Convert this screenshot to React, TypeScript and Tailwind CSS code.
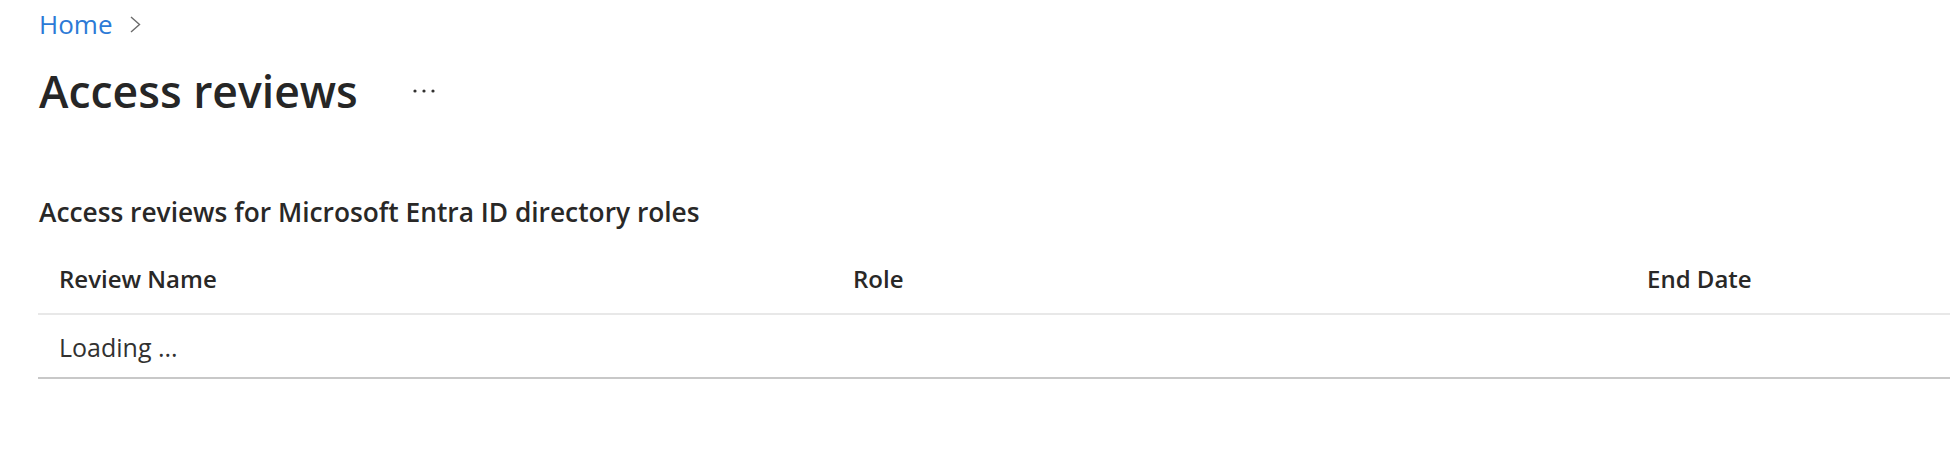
const App = () => {
  return (
    <div className="w-[1950px] h-[460px] overflow-hidden bg-white pl-[38px] font-['Open_Sans',sans-serif] text-[#323130]">
      {/* breadcrumb */}
      <div className="flex items-center pt-[6px] h-[42px]">
        <span className="pl-[1px] text-[26px] leading-[36px] text-[#2c7ad6]">Home</span>
        <svg
          className="ml-[18px]"
          width="11"
          height="17"
          viewBox="0 0 11 17"
          fill="none"
        >
          <polyline
            points="1,1 9.5,8.5 1,16"
            stroke="#6b6b6b"
            strokeWidth="1.4"
          />
        </svg>
      </div>

      {/* title */}
      <div className="flex items-center mt-[21px] h-[56px]">
        <h1 className="pl-[1px] text-[44.5px] leading-[56px] font-semibold text-[#262626]">
          Access reviews
        </h1>
        <svg className="ml-[55px]" width="22" height="4" viewBox="0 0 22 4">
          <circle cx="2" cy="2" r="1.6" fill="#323130" />
          <circle cx="11" cy="2" r="1.6" fill="#323130" />
          <circle cx="20" cy="2" r="1.6" fill="#323130" />
        </svg>
      </div>

      {/* section */}
      <h2 className="mt-[75px] pl-[1px] text-[26.3px] leading-[36px] font-semibold text-[#292827]">
        Access reviews for Microsoft Entra ID directory roles
      </h2>

      <div className="w-[2382px]">
        <div className="grid grid-cols-[794px_794px_794px] pt-[31px] pb-[16px] border-b-2 border-[#e8e8e8] text-[24px] leading-[36px] font-semibold text-[#292827]">
          <div className="pl-[21px]">Review Name</div>
          <div className="pl-[21px]">Role</div>
          <div className="pl-[21px]">End Date</div>
        </div>
        <div className="pt-[14px] pb-[12px] border-b-2 border-[#c8c8c8] text-[25px] leading-[36px]">
          <div className="pl-[21px]">Loading ...</div>
        </div>
      </div>
    </div>
  );
};

export default App;
